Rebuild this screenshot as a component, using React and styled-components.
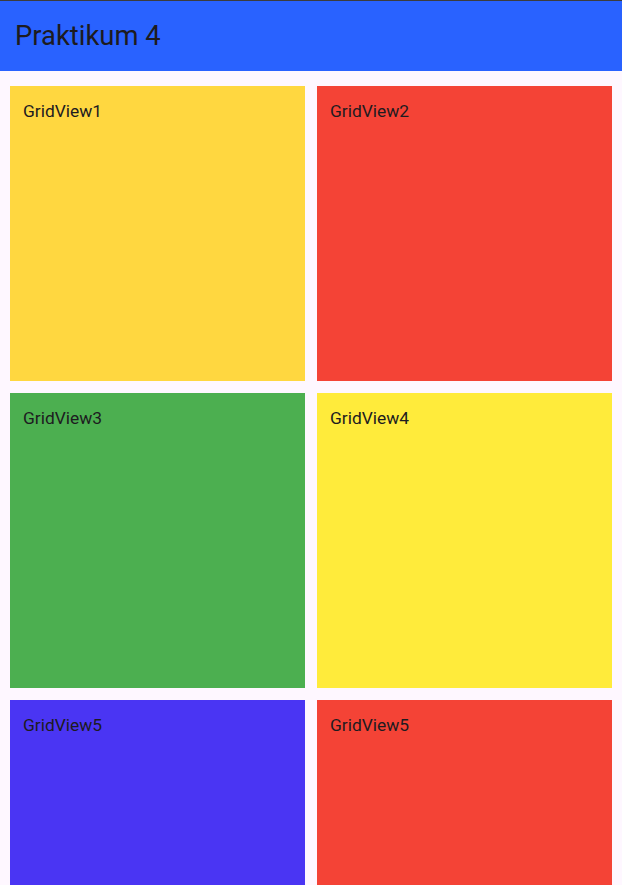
import styled, { createGlobalStyle } from "styled-components";

const tiles = [
  { label: "GridView1", color: "#FFD740" },
  { label: "GridView2", color: "#F44336" },
  { label: "GridView3", color: "#4CAF50" },
  { label: "GridView4", color: "#FFEB3B" },
  { label: "GridView5", color: "#4A35F3" },
  { label: "GridView5", color: "#F44336" },
];

export default function App() {
  return (
    <>
      <GlobalStyle />
      <Page>
        <AppBar>
          <Title>Praktikum 4</Title>
        </AppBar>
        <Grid>
          {tiles.map((tile, i) => (
            <Tile key={i} $color={tile.color}>
              {tile.label}
            </Tile>
          ))}
        </Grid>
      </Page>
    </>
  );
}

const GlobalStyle = createGlobalStyle`
  html, body {
    margin: 0;
    padding: 0;
    background-color: #FEF7FF;
    font-family: Roboto, "Liberation Sans", sans-serif;
    overflow: hidden;
  }
`;

const Page = styled.div`
  width: 622px;
  height: 885px;
  overflow: hidden;
  background-color: #FEF7FF;
`;

const AppBar = styled.header`
  height: 70px;
  border-top: 1px solid #3c3c3c;
  background-color: #2962FF;
  display: flex;
  align-items: center;
  padding: 0 15px;
`;

const Title = styled.h1`
  margin: 0;
  font-size: 27.4px;
  font-weight: 400;
  color: #1D1B20;
`;

const Grid = styled.div`
  display: grid;
  grid-template-columns: 1fr 1fr;
  gap: 12px;
  padding: 15px 10px 0;
`;

const Tile = styled.div`
  aspect-ratio: 1 / 1;
  background-color: ${({ $color }) => $color};
  padding: 14.5px 13px;
  box-sizing: border-box;
  font-size: 17.4px;
  color: #1D1B20;
`;
